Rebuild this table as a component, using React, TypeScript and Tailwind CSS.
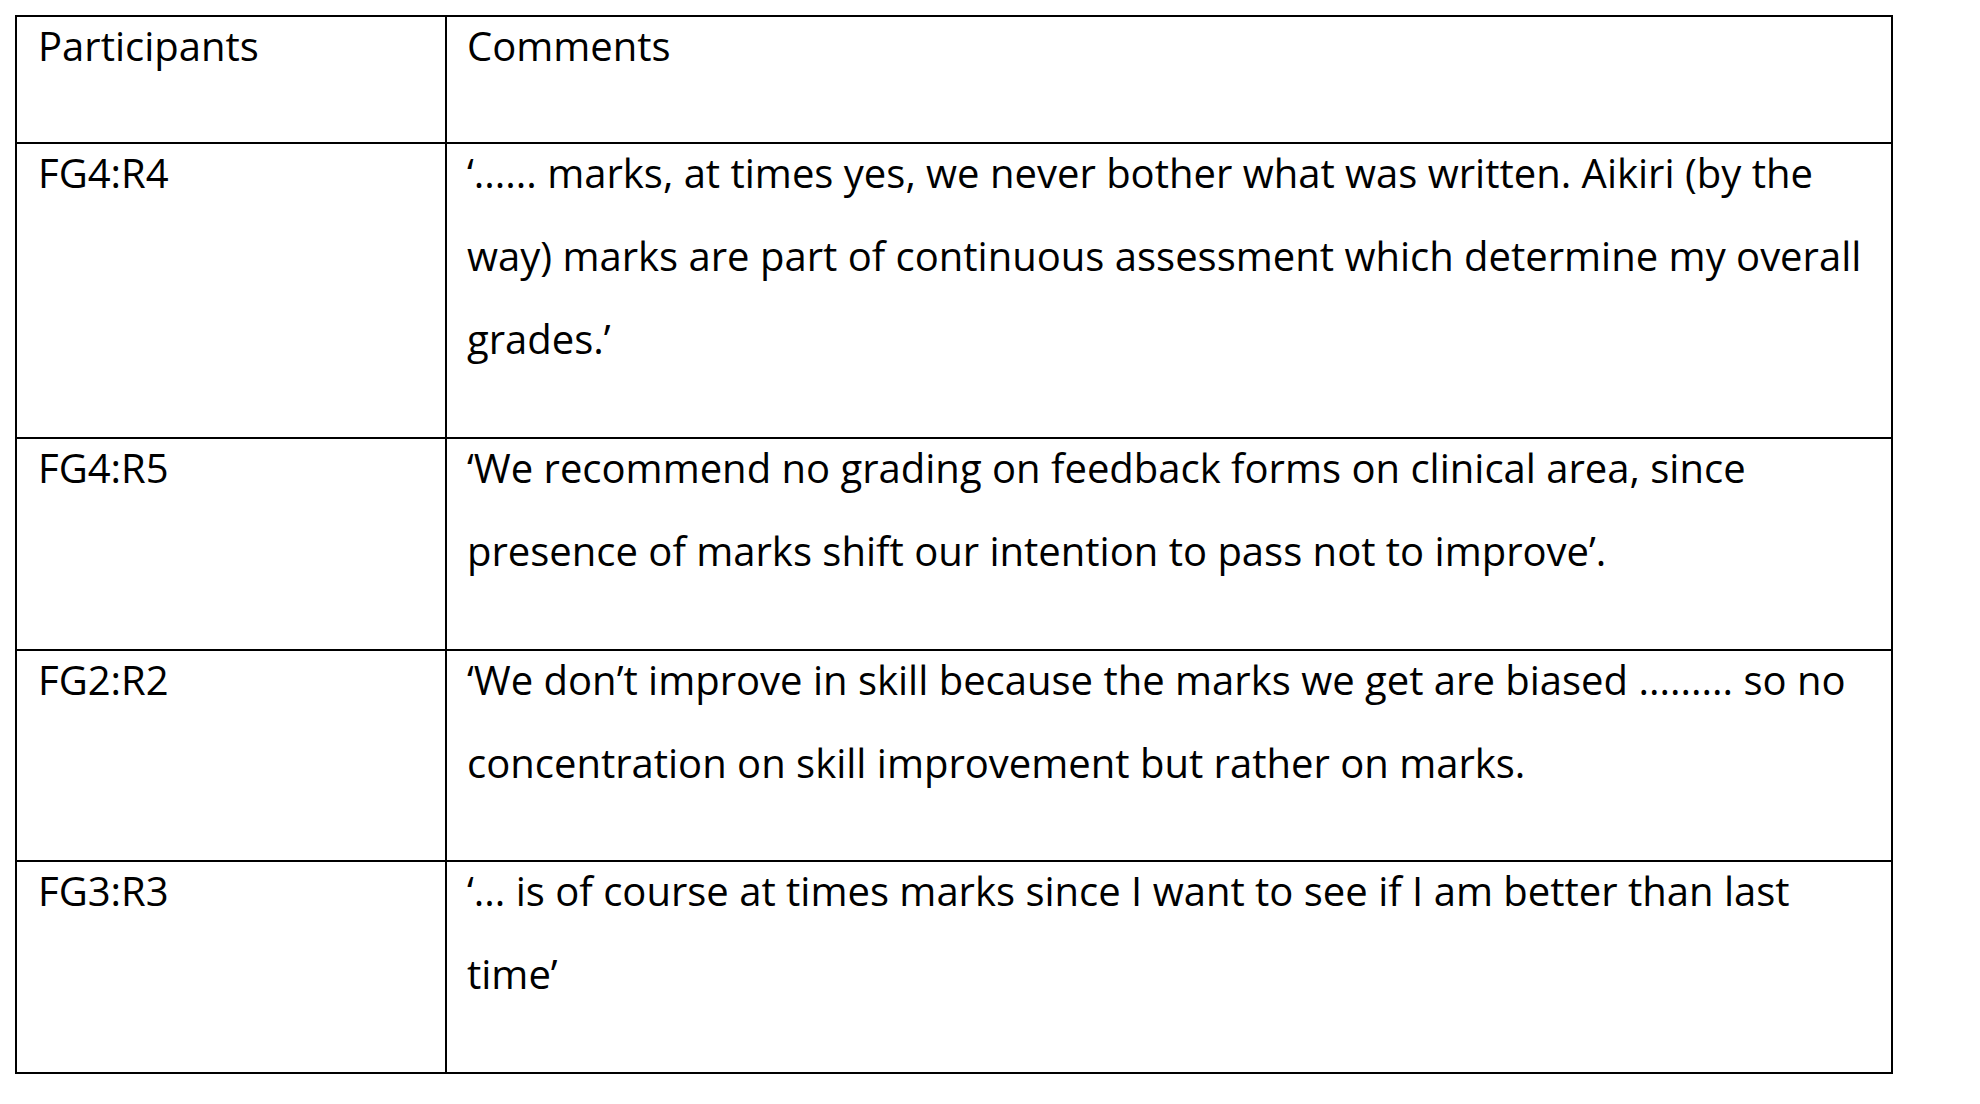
import React from "react";

const rows: { p: string; lines: string[]; h: string }[] = [
  {
    p: "FG4:R4",
    lines: [
      "\u2018...... marks, at times yes, we never bother what was written. Aikiri (by the",
      "way) marks are part of continuous assessment which determine my overall",
      "grades.\u2019",
    ],
    h: "h-[295px]",
  },
  {
    p: "FG4:R5",
    lines: [
      "\u2018We recommend no grading on feedback forms on clinical area, since",
      "presence of marks shift our intention to pass not to improve\u2019.",
    ],
    h: "h-[212px]",
  },
  {
    p: "FG2:R2",
    lines: [
      "\u2018We don\u2019t improve in skill because the marks we get are biased ......... so no",
      "concentration on skill improvement but rather on marks.",
    ],
    h: "h-[211px]",
  },
  {
    p: "FG3:R3",
    lines: [
      "\u2018... is of course at times marks since I want to see if I am better than last",
      "time\u2019",
    ],
    h: "h-[212px]",
  },
];

export default function App() {
  return (
    <div className="w-[1980px] h-[1104px] bg-white pl-[15px] pt-[15px] text-black font-['Open_Sans',sans-serif] text-[40px] leading-[83px] overflow-hidden">
      <div className="w-[1878px] border-2 border-black flex flex-col">
        <div className="flex h-[125px]">
          <div className="w-[430px] border-r-2 border-black pl-[21px] whitespace-nowrap">
            <div className="-mt-[13px]">Participants</div>
          </div>
          <div className="flex-1 pl-[20px] whitespace-nowrap">
            <div className="-mt-[13px]">Comments</div>
          </div>
        </div>
        {rows.map((r) => (
          <div key={r.p} className={`flex border-t-2 border-black ${r.h}`}>
            <div className="w-[430px] border-r-2 border-black pl-[21px] whitespace-nowrap">
              <div className="-mt-[13px]">{r.p}</div>
            </div>
            <div className="flex-1 pl-[20px] whitespace-nowrap">
              <div className="-mt-[13px]">
                {r.lines.map((l, i) => (
                  <div key={i}>{l}</div>
                ))}
              </div>
            </div>
          </div>
        ))}
      </div>
    </div>
  );
}
